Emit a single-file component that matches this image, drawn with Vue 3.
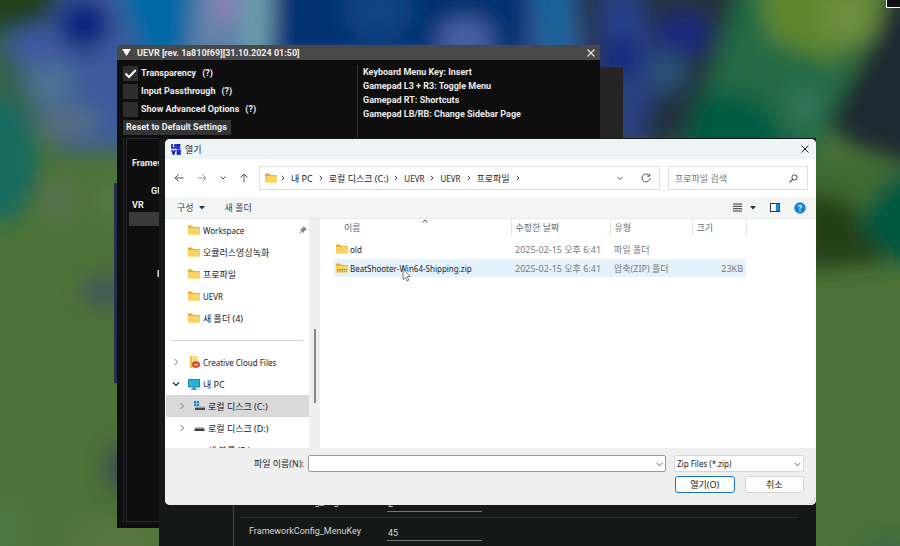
<script setup>
import { ref } from 'vue'

const options = ref([
  { id: 'transparency', label: 'Transparency', on: true },
  { id: 'passthrough', label: 'Input Passthrough', on: false },
  { id: 'advanced', label: 'Show Advanced Options', on: false },
])
const hints = [
  'Keyboard Menu Key: Insert',
  'Gamepad L3 + R3: Toggle Menu',
  'Gamepad RT: Shortcuts',
  'Gamepad LB/RB: Change Sidebar Page',
]
const crumbs = ['내 PC', '로컬 디스크 (C:)', 'UEVR', 'UEVR', '프로파일']
const places = [
  { name: 'Workspace', icon: 'folder', pinned: true },
  { name: '오큘러스영상녹화', icon: 'folder' },
  { name: '프로파일', icon: 'folder' },
  { name: 'UEVR', icon: 'folder' },
  { name: '새 폴더 (4)', icon: 'folder' },
]
const tree = [
  { name: 'Creative Cloud Files', icon: 'cloud', level: 0 },
  { name: '내 PC', icon: 'pc', level: 0, open: true },
  { name: '로컬 디스크 (C:)', icon: 'system', level: 1, selected: true },
  { name: '로컬 디스크 (D:)', icon: 'disk', level: 1 },
  { name: '새 볼륨 (E:)', icon: 'none', level: 1 },
]
const files = [
  { name: 'old', date: '2025-02-15 오후 6:41', type: '파일 폴더', size: '', zip: false },
  { name: 'BeatShooter-Win64-Shipping.zip', date: '2025-02-15 오후 6:41', type: '압축(ZIP) 폴더', size: '23KB', zip: true },
]
// Names without Hangul are set one size smaller so both scripts look even.
const isLatin = (text) => /^[\x20-\x7e]+$/.test(text)
const fileName = ref('')
const search = ref('')
const menuKey = ref('45')
const logLevel = ref('2')
</script>

<template>
  <main class="desktop">
    <svg class="wallpaper" viewBox="0 0 900 546" preserveAspectRatio="none" aria-hidden="true">
      <defs>
        <filter id="soft" x="-50%" y="-50%" width="200%" height="200%"><feGaussianBlur stdDeviation="11" /></filter>
        <filter id="softer" x="-50%" y="-50%" width="200%" height="200%"><feGaussianBlur stdDeviation="16" /></filter>
      </defs>
      <rect width="900" height="546" fill="#4d7338" />
      <g filter="url(#soft)">
        <path d="M-30-30H620V150H60L20 60L-30 40Z" fill="#3e5a9c" />
        <path d="M-30-30H68L50 22L-30 42Z" fill="#243f1b" />
        <path d="M-30 30H8L30 90L48 130L20 140L-30 150Z" fill="#346048" />
        <ellipse cx="30" cy="46" rx="22" ry="16" fill="#4358a2" />
        <ellipse cx="50" cy="84" rx="24" ry="22" fill="#4a7594" />
        <ellipse cx="68" cy="122" rx="34" ry="14" fill="#596f80" />
        <ellipse cx="-2" cy="160" rx="40" ry="62" fill="#176b5e" />
        <ellipse cx="84" cy="24" rx="26" ry="26" fill="#10207c" />
        <path d="M112-30H200V60H140Z" fill="#0069a4" />
        <path d="M196-30H236V60H190Z" fill="#6383a8" />
        <ellipse cx="225" cy="6" rx="12" ry="16" fill="#9580ba" />
        <path d="M240-30H272V60H240Z" fill="#6d9fae" />
        <path d="M276-30H530V60H270Z" fill="#053272" />
        <ellipse cx="378" cy="10" rx="35" ry="30" fill="#0a4485" />
        <ellipse cx="465" cy="38" rx="28" ry="20" fill="#4a62a4" />
        <path d="M532-30H570V60H545Z" fill="#08639a" />
        <path d="M574-30H770L740 40L700 150H590Z" fill="#20303c" />
        <path d="M600-20L640-10L660 70L640 150H596Z" fill="#293f80" />
        <ellipse cx="622" cy="22" rx="16" ry="18" fill="#263d8e" />
        <ellipse cx="683" cy="34" rx="26" ry="20" fill="#1a2a82" />
        <ellipse cx="622" cy="58" rx="20" ry="18" fill="#18277e" />
        <ellipse cx="668" cy="72" rx="18" ry="20" fill="#2c5278" />
        <path d="M745-30H890L850 70L810 170H670L715 66Z" fill="#216a45" />
        <path d="M700 90L760 100L800 160H680Z" fill="#065a43" />
        <path d="M754-30H890L862 34L830 62L770 40Z" fill="#5d862e" />
        <ellipse cx="848" cy="16" rx="30" ry="28" fill="#6d8f3e" />
        <ellipse cx="805" cy="106" rx="20" ry="22" fill="#2f7457" />
        <path d="M930-20H898L868 50L825 125L862 150L930 170Z" fill="#1f2b30" />
        <path d="M810 150L850 160L900 170L880 200H800Z" fill="#416b31" />
        <path d="M800 190L850 200L890 262L800 270Z" fill="#233f12" />
        <path d="M930 160L880 185L858 225L890 258L930 265Z" fill="#06583f" />
        <ellipse cx="104" cy="292" rx="22" ry="15" fill="#42535e" />
        <ellipse cx="122" cy="468" rx="16" ry="26" fill="#3c4b50" />
        <ellipse cx="58" cy="200" rx="14" ry="20" fill="#5a7052" />
        <ellipse cx="112" cy="200" rx="12" ry="12" fill="#5e8055" />
      </g>
      <g filter="url(#softer)">
        <ellipse cx="890" cy="556" rx="34" ry="14" fill="#35604f" />
        <ellipse cx="0" cy="528" rx="8" ry="18" fill="#4c8068" />
        <ellipse cx="120" cy="546" rx="40" ry="14" fill="#647a45" />
      </g>
    </svg>

    <div class="corner-box"></div>
    <div class="edge-strip"></div>

    <section class="game-ui" aria-label="UEVR">
      <header class="game-title">
        <svg class="tri" viewBox="0 0 10 8"><path d="M0 0H10L5 8Z" fill="#fff" /></svg>
        <span class="grow">UEVR [rev. 1a810f69][31.10.2024 01:50]</span>
        <button class="bare" aria-label="Close UEVR">
          <svg width="8" height="8" viewBox="0 0 8 8"><path d="M.5.5L7.5 7.5M7.5.5L.5 7.5" stroke="#e8e8e8" stroke-width="1.1" /></svg>
        </button>
      </header>
      <div class="game-body">
        <div class="game-options">
          <label v-for="o in options" :key="o.id" class="check">
            <span class="tick">
              <input v-model="o.on" type="checkbox" />
              <svg v-if="o.on" viewBox="0 0 15 15"><path d="M2.500 7.500L6 11L12.800 4" fill="none" stroke="#fff" stroke-width="2" /></svg>
            </span>
            <span>{{ o.label }}</span>
            <span class="hint">(?)</span>
          </label>
          <button class="reset">Reset to Default Settings</button>
        </div>
        <div class="game-hints">
          <span v-for="h in hints" :key="h">{{ h }}</span>
        </div>
      </div>
      <div class="game-panels">
        <nav class="game-nav">
          <span>Framework</span>
          <span class="spaced inset">GUI</span>
          <span>VR</span>
          <span class="bar"></span>
          <span class="low">Keybinds</span>
        </nav>
      </div>
    </section>

    <div class="back-top"></div>
    <section class="back-window">
      <div class="back-body">
        <label class="field">
          <span>FrameworkConfig_LogLevel</span>
          <input v-model="logLevel" />
        </label>
        <label class="field">
          <span>FrameworkConfig_MenuKey</span>
          <input v-model="menuKey" />
        </label>
      </div>
    </section>

    <section class="dialog" role="dialog" aria-label="열기">
      <header class="dlg-title">
        <svg width="10" height="11" viewBox="0 0 10 11" fill="none" stroke="#1222b4" stroke-width="1.700">
          <path d="M1 0V4H4V0M9.500.8H6V4.500H9.500M6 2.600H9M1 6L2.500 10.500L4 6M6.500 11V6.500H9V8.500H7L9.500 11" />
        </svg>
        <span class="grow">열기</span>
        <button class="bare" aria-label="닫기">
          <svg width="8" height="8" viewBox="0 0 8 8"><path d="M.5.5L7.500 7.500M7.500.5L.5 7.500" stroke="#222" stroke-width="1" /></svg>
        </button>
      </header>

      <div class="nav-row">
        <div class="arrows">
          <button class="bare" aria-label="뒤로"><svg width="10" height="10" viewBox="0 0 10 10"><path d="M9.500 5H1M4.500 1.500L1 5L4.500 8.500" class="line" /></svg></button>
          <button class="bare pale" aria-label="앞으로"><svg width="10" height="10" viewBox="0 0 10 10"><path d="M.5 5H9M5.500 1.500L9 5L5.500 8.500" class="line" /></svg></button>
          <button class="bare" aria-label="최근 위치"><svg width="6" height="10" viewBox="0 0 6 10"><path d="M.5 3.500L3 6L5.500 3.500" class="line" /></svg></button>
          <button class="bare" aria-label="위로"><svg width="10" height="10" viewBox="0 0 10 10"><path d="M5 9.500V1M1.500 4.500L5 1L8.500 4.500" class="line" /></svg></button>
        </div>
        <div class="address">
          <svg class="folder" viewBox="0 0 12 10"><path d="M0 1.500Q0 .5 1 .5H4L5.500 2H11Q12 2 12 3V5H0Z" fill="#e3a92c" /><rect y="2.800" width="12" height="7" rx="1" fill="#fbd365" /></svg>
          <template v-for="(c, i) in crumbs" :key="i">
            <svg class="sep" viewBox="0 0 4 6"><path d="M.8.8L3 3L.8 5.200" fill="none" stroke="#444" /></svg>
            <a href="#" :class="{ latin: isLatin(c) }">{{ c }}</a>
          </template>
          <svg class="sep" viewBox="0 0 4 6"><path d="M.8.8L3 3L.8 5.200" fill="none" stroke="#444" /></svg>
          <span class="grow"></span>
          <button class="bare" aria-label="이전 위치"><svg width="6" height="10" viewBox="0 0 6 10"><path d="M.3 3.700L3 6.400L5.700 3.700" class="line" /></svg></button>
          <button class="bare reload" aria-label="새로 고침"><svg width="10" height="10" viewBox="0 0 10 10"><path d="M8.500 3A4 4 0 1 0 9 5.200M8.700.8V3.200H6.300" class="line" /></svg></button>
        </div>
        <label class="search">
          <input v-model="search" placeholder="프로파일 검색" aria-label="프로파일 검색" />
          <svg width="9" height="9" viewBox="0 0 9 9"><circle cx="5.500" cy="3.400" r="2.600" fill="none" stroke="#444" /><path d="M3.700 5.300L.6 8.400" stroke="#444" stroke-width="1.200" /></svg>
        </label>
      </div>

      <div class="toolbar">
        <button class="bare tool">구성 <svg width="6" height="4" viewBox="0 0 6 4"><path d="M0 0H6L3 3.500Z" fill="#1e3246" /></svg></button>
        <button class="bare tool">새 폴더</button>
        <span class="grow"></span>
        <button class="bare tool views" aria-label="보기">
          <svg width="9" height="9" viewBox="0 0 9 9"><path d="M0 1H9M0 3.300H9M0 5.700H9M0 8H9" stroke="#333" /></svg>
          <svg width="6" height="4" viewBox="0 0 6 4"><path d="M0 0H6L3 3.500Z" fill="#1e3246" /></svg>
        </button>
        <button class="bare" aria-label="미리 보기 창"><svg width="10" height="9" viewBox="0 0 10 9"><rect x=".5" y=".5" width="9" height="8" fill="#fff" stroke="#1c3c5c" /><rect x="6" y="1" width="3.500" height="7" fill="#1b87dc" /></svg></button>
        <button class="bare" aria-label="도움말"><svg width="12" height="12" viewBox="0 0 12 12"><circle cx="6" cy="6" r="5.700" fill="#1683d0" /><path d="M4.400 4.700Q4.400 3.200 6 3.200Q7.600 3.200 7.600 4.600Q7.600 5.500 6 6.200V7.300M6 8.200V9.400" fill="none" stroke="#fff" stroke-width="1.100" /></svg></button>
      </div>

      <div class="content">
        <aside class="side">
          <a v-for="p in places" :key="p.name" href="#" class="place">
            <svg class="folder" viewBox="0 0 12 10"><path d="M0 1.500Q0 .5 1 .5H4L5.500 2H11Q12 2 12 3V5H0Z" fill="#e3a92c" /><rect y="2.800" width="12" height="7" rx="1" fill="#fbd365" /></svg>
            <span class="grow" :class="{ latin: isLatin(p.name) }">{{ p.name }}</span>
            <svg v-if="p.pinned" width="8" height="8" viewBox="0 0 8 8"><path d="M4.500 0L8 3.500L6.500 3.900L5 5.400L4.700 7.200L3 5.500L.5 8L0 7.500L2.500 5L.8 3.300L2.600 3L4.100 1.500Z" fill="#7b8791" /></svg>
          </a>
          <div class="rule"></div>
          <a v-for="t in tree" :key="t.name" href="#" class="node" :class="{ selected: t.selected, child: t.level }">
            <svg class="twist" viewBox="0 0 8 8"><path v-if="t.open" d="M1 2.500L4 5.500L7 2.500" fill="none" stroke="#222" stroke-width="1.200" /><path v-else-if="t.icon !== 'none'" d="M2.500 1L5.500 4L2.500 7" fill="none" stroke="#777" /></svg>
            <svg v-if="t.icon === 'cloud'" class="ico" viewBox="0 0 12 12"><path d="M2 0H8.500L10 1.500V12H2Z" fill="#fbdc86" /><path d="M2 0H4V12H2Z" fill="#f2bd4b" /><ellipse cx="8" cy="8.500" rx="4" ry="3.300" fill="#d8401f" /><path d="M5.800 9.300Q6.500 7 8 8.500Q9.500 10 10.300 8.300M7 10L9.800 7.300" fill="none" stroke="#fff" stroke-width=".7" /></svg>
            <svg v-else-if="t.icon === 'pc'" class="ico" viewBox="0 0 12 12"><rect y="1" width="12" height="8.500" rx="1" fill="#1476b0" /><rect x=".8" y="1.800" width="10.400" height="6.900" fill="#27b2dc" /><path d="M4.500 9.500H7.500V11H9V11.700H3V11H4.500Z" fill="#2878a0" /></svg>
            <svg v-else-if="t.icon === 'system'" class="ico" viewBox="0 0 12 12"><path d="M1 1H3.200V3.200H1ZM3.800 1H6V3.200H3.800ZM1 3.800H3.200V6H1ZM3.800 3.800H6V6H3.800Z" fill="#148bd8" /><rect x="2" y="7.500" width="10" height="2.500" fill="#43484d" /><rect x="2" y="6.500" width="10" height="1" fill="#a2a8ad" /></svg>
            <svg v-else-if="t.icon === 'disk'" class="ico" viewBox="0 0 12 12"><path d="M2.500 5H10.500L11.500 6.500H1.500Z" fill="#b9bdc0" /><rect x="1.500" y="6.500" width="10" height="2.500" rx=".5" fill="#3c3f42" /></svg>
            <span v-else class="ico"></span>
            <span :class="{ latin: isLatin(t.name) }">{{ t.name }}</span>
          </a>
        </aside>
        <div class="scroll"><div class="thumb"></div></div>
        <div class="list">
          <table>
            <colgroup><col class="c-name" /><col class="c-date" /><col class="c-type" /><col class="c-size" /></colgroup>
            <thead>
              <tr>
                <th class="sorted"><svg viewBox="0 0 6 4"><path d="M.5 3.500L3 1L5.500 3.500" fill="none" stroke="#555" /></svg>이름</th>
                <th>수정한 날짜</th><th>유형</th><th>크기</th>
              </tr>
            </thead>
            <tbody>
              <tr v-for="f in files" :key="f.name" :class="{ hover: f.zip }">
                <td>
                  <div class="name">
                    <svg class="folder" viewBox="0 0 12 10"><path d="M0 1.500Q0 .5 1 .5H4L5.500 2H11Q12 2 12 3V5H0Z" fill="#e3a92c" /><rect y="2.800" width="12" height="7" rx="1" fill="#fbd365" /><path v-if="f.zip" d="M1 6.500H11M1 8H11" stroke="#8d8a79" stroke-width="1" stroke-dasharray="1.500 .7" /></svg>
                    <span class="latin">{{ f.name }}</span>
                  </div>
                </td>
                <td>{{ f.date }}</td>
                <td>{{ f.type }}</td>
                <td class="size">{{ f.size }}</td>
              </tr>
            </tbody>
          </table>
        </div>
      </div>

      <footer class="dlg-foot">
        <label class="name-label" for="file-name">파일 이름(N):</label>
        <div class="combo">
          <input id="file-name" v-model="fileName" />
          <svg viewBox="0 0 7 5"><path d="M.5.8L3.500 3.800L6.500.8" fill="none" stroke="#666" /></svg>
        </div>
        <div class="combo filter">
          <select class="latin" aria-label="파일 형식"><option>Zip Files (*.zip)</option></select>
          <svg viewBox="0 0 7 5"><path d="M.5.8L3.500 3.800L6.500.8" fill="none" stroke="#666" /></svg>
        </div>
        <div class="actions">
          <button class="primary">열기(O)</button>
          <button>취소</button>
        </div>
      </footer>
      <svg class="grip" viewBox="0 0 8 8"><path d="M6 1h1v1H6zM6 3.500h1v1H6zM3.500 3.500h1v1h-1zM6 6h1v1H6zM3.500 6h1v1h-1zM1 6h1v1H1z" fill="#aaa" /></svg>
    </section>

    <svg class="pointer" viewBox="0 0 9 14"><path d="M1 1V11.500L3.400 9.300L5 13L6.800 12.200L5.200 8.600H8.300Z" fill="#fff" stroke="#555" stroke-width=".8" /></svg>
  </main>
</template>

<style>
body { margin: 0; background: #4d7338; }
</style>

<style scoped>
* { box-sizing: border-box; }
button, input, select { font: inherit; color: inherit; margin: 0; }
a { color: inherit; text-decoration: none; }
svg { display: block; flex: none; }
.desktop { position: relative; min-height: 100vh; overflow: hidden; font-family: "Noto Sans", "Noto Sans CJK KR", sans-serif; font-size: 9px; color: #222; }
.wallpaper { position: absolute; inset: 0; width: 100%; height: 100%; }
.corner-box { position: absolute; top: 0; right: 0; width: 14px; height: 8px; background: #111; border: solid #fff; border-width: 0 0 1px 1px; }
.edge-strip { position: absolute; left: 114px; top: 183px; width: 4px; height: 200px; background: #282d4c; }
.grow { flex: 1; }
.latin { font-size: 8px; }
.bare { display: flex; align-items: center; padding: 0; border: 0; background: none; }
.line { fill: none; stroke: #555; stroke-width: 1; }
.pale { opacity: .6; }

.game-ui { position: absolute; left: 117px; right: 300px; top: 45px; bottom: 18px; display: flex; flex-direction: column; background: #0e0e0e; color: #ececec; font-family: Roboto, sans-serif; font-size: 9px; font-weight: 700; }
.game-title { display: flex; align-items: center; height: 15px; padding: 0 5px; background: #484848; }
.tri { width: 9px; height: 7px; margin-right: 6px; }
.game-body { display: grid; grid-template-columns: 1fr 1fr; padding: 6px 9px 0 6px; height: 78px; }
.game-options { display: flex; flex-direction: column; align-items: flex-start; gap: 3px; }
.check { display: flex; align-items: center; gap: 3px; height: 15px; line-height: 15px; }
.tick { display: grid; width: 15px; height: 15px; }
.tick > * { grid-area: 1 / 1; width: 15px; height: 15px; }
.tick input { appearance: none; background: #2e2e2e; }
.hint { margin-left: 3px; }
.reset { height: 15px; padding: 0 4px 1px 3px; border: 0; background: #343434; }
.game-hints { display: flex; flex-direction: column; border-left: 1px solid #333; padding-left: 5px; line-height: 14px; margin-top: -1px; }
.game-panels { flex: 1; margin: 0 6px 6px; padding-left: 2px; border-left: 1px solid #2b2b31; }
.game-nav { display: flex; flex-direction: column; height: 100%; padding: 17px 2px; border: 1px solid #2b2b31; line-height: 14px; }
.game-nav span { padding-left: 3px; }
.game-nav .spaced { margin-top: 14px; }
.game-nav .inset { padding-left: 22px; }
.game-nav .bar { height: 14px; background: #3a3a3a; }
.game-nav .low { margin-top: 41px; padding-left: 28px; }

.back-top { position: absolute; left: 600px; right: 277px; top: 67px; height: 80px; background: #252525; }
.back-window { position: absolute; left: 159px; right: 84px; top: 138px; bottom: 0; display: flex; flex-direction: column; justify-content: flex-end; padding-left: 74px; background: #161817; color: #d8d8d8; font-family: Roboto, sans-serif; font-size: 9px; }
.back-body { border-left: 1px solid #3d4a58; padding: 0 18px 0 6px; }
.field { display: grid; grid-template-columns: 138px 95px; align-items: start; height: 29px; padding: 4px 0 0 9px; border-top: 1px solid #2b2d2d; line-height: 18px; }
.field input { height: 19px; padding: 4px 1px 0; border: 0; border-bottom: 1px solid #777; background: none; min-width: 0; outline: 0; }

.dialog { position: absolute; left: 165px; right: 84px; top: 139px; display: flex; flex-direction: column; border-radius: 5px; overflow: hidden; background: #fff; }
.dlg-title { display: flex; align-items: center; gap: 4px; height: 20px; padding: 0 7px 0 6px; background: #edf4f5; }
.nav-row { display: flex; align-items: center; gap: 8px; height: 38px; padding: 0 8px 0 9px; }
.arrows { display: flex; gap: 13px; width: 77px; }
.address { flex: 1; display: flex; align-items: center; height: 24px; padding: 0 8px 0 5px; border: 1px solid #ddd; }
.folder { width: 12px; height: 10px; }
.sep { width: 4px; height: 6px; margin: 0 6px; }
.folder + .sep { margin-left: 4px; }
.reload { margin-left: 18px; }
.search { display: flex; align-items: center; width: 140px; height: 24px; padding: 0 9px 0 6px; border: 1px solid #ddd; }
.search input { flex: 1; min-width: 0; padding: 0; border: 0; outline: 0; background: none; }
.search input::placeholder { color: #777; opacity: 1; }
.toolbar { display: flex; align-items: center; gap: 14px; height: 22px; padding: 0 10px 0 12px; background: #f3f5f5; border-bottom: 1px solid #eaecec; }
.tool { gap: 5px; color: #33475c; }
.tool + .tool { margin-left: 6px; }
.toolbar .views { gap: 8px; color: #222; }

.content { display: flex; height: 229px; }
.side { width: 144px; overflow: hidden; }
.place, .node { display: flex; align-items: center; height: 22px; }
.place { gap: 3px; padding: 0 2px 0 23px; }
.rule { height: 22px; margin: 0 6px 0 7px; background: linear-gradient(#d4d4d4, #d4d4d4) 0 50% / 100% 1px no-repeat; }
.node { padding-left: 7px; }
.child { padding-left: 12px; }
.selected { background: #d9d9d9; }
.twist { width: 8px; height: 8px; margin-right: 8px; }
.ico { width: 12px; height: 12px; margin-right: 3px; }
.selected, .child { margin-left: 1px; }
.child .twist { margin-right: 7px; }
.scroll { width: 11px; background: #efefef; }
.thumb { width: 2px; height: 74px; margin: 110px auto 0; background: #858585; }
.list { flex: 1; padding-left: 14px; }
table { table-layout: fixed; width: 412px; border-collapse: collapse; }
.c-name { width: 177px; }
.c-date { width: 99px; }
.c-type { width: 82px; }
.c-size { width: 54px; }
th { height: 17px; padding: 0 0 0 4px; border-right: 1px solid #e4e4e4; text-align: left; font-weight: 400; color: #5a6b7a; }
.sorted { position: relative; padding-left: 10px; }
.sorted svg { position: absolute; top: 0; left: 50%; width: 6px; height: 4px; }
tbody::before { content: ""; display: block; height: 3px; }
td { height: 19px; padding: 0 0 0 4px; color: #777; white-space: nowrap; border: solid #fff; border-width: 1px 0; }
td:first-child { padding-left: 2px; color: #222; }
.name { display: flex; align-items: center; gap: 2px; }
td.size { padding-right: 3px; text-align: right; }
.hover { background: #e4f2fd; }

.dlg-foot { display: grid; grid-template-columns: 139px 1fr 134px; gap: 4px; padding: 7px 12px 12px 0; background: #efefef; height: 57px; }
.name-label { text-align: right; line-height: 17px; }
.combo { position: relative; height: 17px; }
.combo input, .combo select { appearance: none; width: 100%; height: 17px; padding: 0 2px; border: 1px solid #999; border-radius: 2px; background: #fff; outline: 0; }
.combo select { border-color: #d6d6d6; }
.combo svg { position: absolute; right: 3px; top: 7px; width: 7px; height: 5px; }
.filter { margin-left: 4px; }
.actions { grid-column: 3; display: grid; grid-template-columns: 1fr 1fr; gap: 10px; margin-left: 5px; }
.actions button { height: 17px; padding: 0; border: 1px solid #d2d2d2; border-radius: 3px; background: #fdfdfd; }
.actions .primary { border-color: #1a75b8; }
.grip { position: absolute; right: 0; bottom: 0; width: 8px; height: 8px; }
.pointer { position: absolute; left: 402px; top: 268px; width: 9px; height: 14px; }
</style>
